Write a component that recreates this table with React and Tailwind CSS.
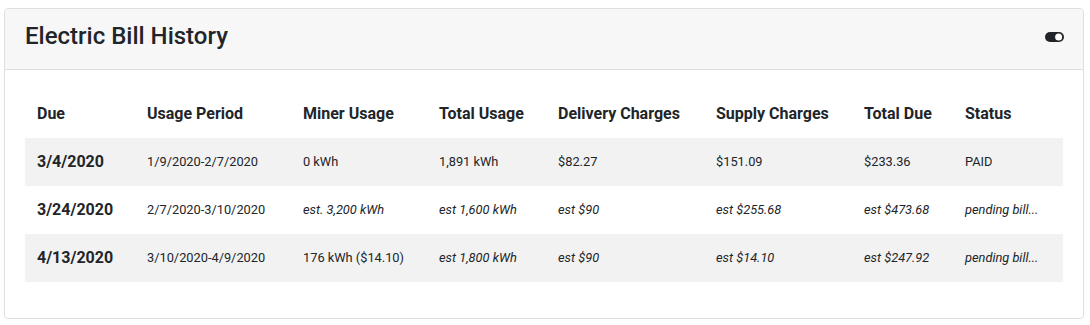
import React from "react";

const rows = [
  { due: "3/4/2020", period: "1/9/2020-2/7/2020", miner: "0 kWh", total: "1,891 kWh", delivery: "$82.27", supply: "$151.09", totalDue: "$233.36", status: "PAID", est: false, minerEst: false },
  { due: "3/24/2020", period: "2/7/2020-3/10/2020", miner: "est. 3,200 kWh", total: "est 1,600 kWh", delivery: "est $90", supply: "est $255.68", totalDue: "est $473.68", status: "pending bill...", est: true, minerEst: true },
  { due: "4/13/2020", period: "3/10/2020-4/9/2020", miner: "176 kWh ($14.10)", total: "est 1,800 kWh", delivery: "est $90", supply: "est $14.10", totalDue: "est $247.92", status: "pending bill...", est: true, minerEst: false },
];

const widths = ["w-[110px]", "w-[156px]", "w-[136px]", "w-[119px]", "w-[158px]", "w-[148px]", "w-[101px]", "w-[110px]"];
const heads = ["Due", "Usage Period", "Miner Usage", "Total Usage", "Delivery Charges", "Supply Charges", "Total Due", "Status"];

export default function App() {
  return (
    <div className="bg-white w-[1090px] h-[325px] pt-2 px-1 font-['Roboto',sans-serif] text-[#212529]">
      <div className="w-[1080px] h-[311px] border border-[#dfdfdf] rounded bg-white overflow-hidden">
        <div className="h-[61px] bg-[#f7f7f7] border-b border-[#dfdfdf] flex items-center justify-between pl-5 pr-5">
          <h1 className="text-[24px] leading-[28px] font-medium -mt-[6px]">Electric Bill History</h1>
          <svg width="19" height="10" viewBox="0 0 19 10" className="-mt-[5px] -mr-[1px]">
            <rect x="0" y="0" width="19" height="10" rx="5" fill="#212529" />
            <circle cx="13.6" cy="5" r="3.5" fill="#ffffff" />
          </svg>
        </div>
        <div className="p-5">
          <table className="w-[1038px] table-fixed border-collapse mb-4">
            <thead>
              <tr>
                {heads.map((h, i) => (
                  <th key={h} className={`${widths[i]} text-left px-3 pt-[12px] pb-[12px] text-[16px] leading-6 font-bold`}>{h}</th>
                ))}
              </tr>
            </thead>
            <tbody>
              {rows.map((r, idx) => (
                <tr key={r.due} className={idx % 2 === 0 ? "bg-[#f2f2f2]" : "bg-white"}>
                  <td className="px-3 py-3 text-[16px] leading-6 font-bold whitespace-nowrap">{r.due}</td>
                  <td className="px-3 py-3 text-[12.8px] leading-6 whitespace-nowrap">{r.period}</td>
                  <td className={`px-3 py-3 text-[12.8px] leading-6 whitespace-nowrap ${r.minerEst ? "italic" : ""}`}>{r.miner}</td>
                  <td className={`px-3 py-3 text-[12.8px] leading-6 whitespace-nowrap ${r.est ? "italic" : ""}`}>{r.total}</td>
                  <td className={`px-3 py-3 text-[12.8px] leading-6 whitespace-nowrap ${r.est ? "italic" : ""}`}>{r.delivery}</td>
                  <td className={`px-3 py-3 text-[12.8px] leading-6 whitespace-nowrap ${r.est ? "italic" : ""}`}>{r.supply}</td>
                  <td className={`px-3 py-3 text-[12.8px] leading-6 whitespace-nowrap ${r.est ? "italic" : ""}`}>{r.totalDue}</td>
                  <td className={`px-3 py-3 text-[12.8px] leading-6 whitespace-nowrap ${r.est ? "italic" : ""}`}>{r.status}</td>
                </tr>
              ))}
            </tbody>
          </table>
        </div>
      </div>
    </div>
  );
}
